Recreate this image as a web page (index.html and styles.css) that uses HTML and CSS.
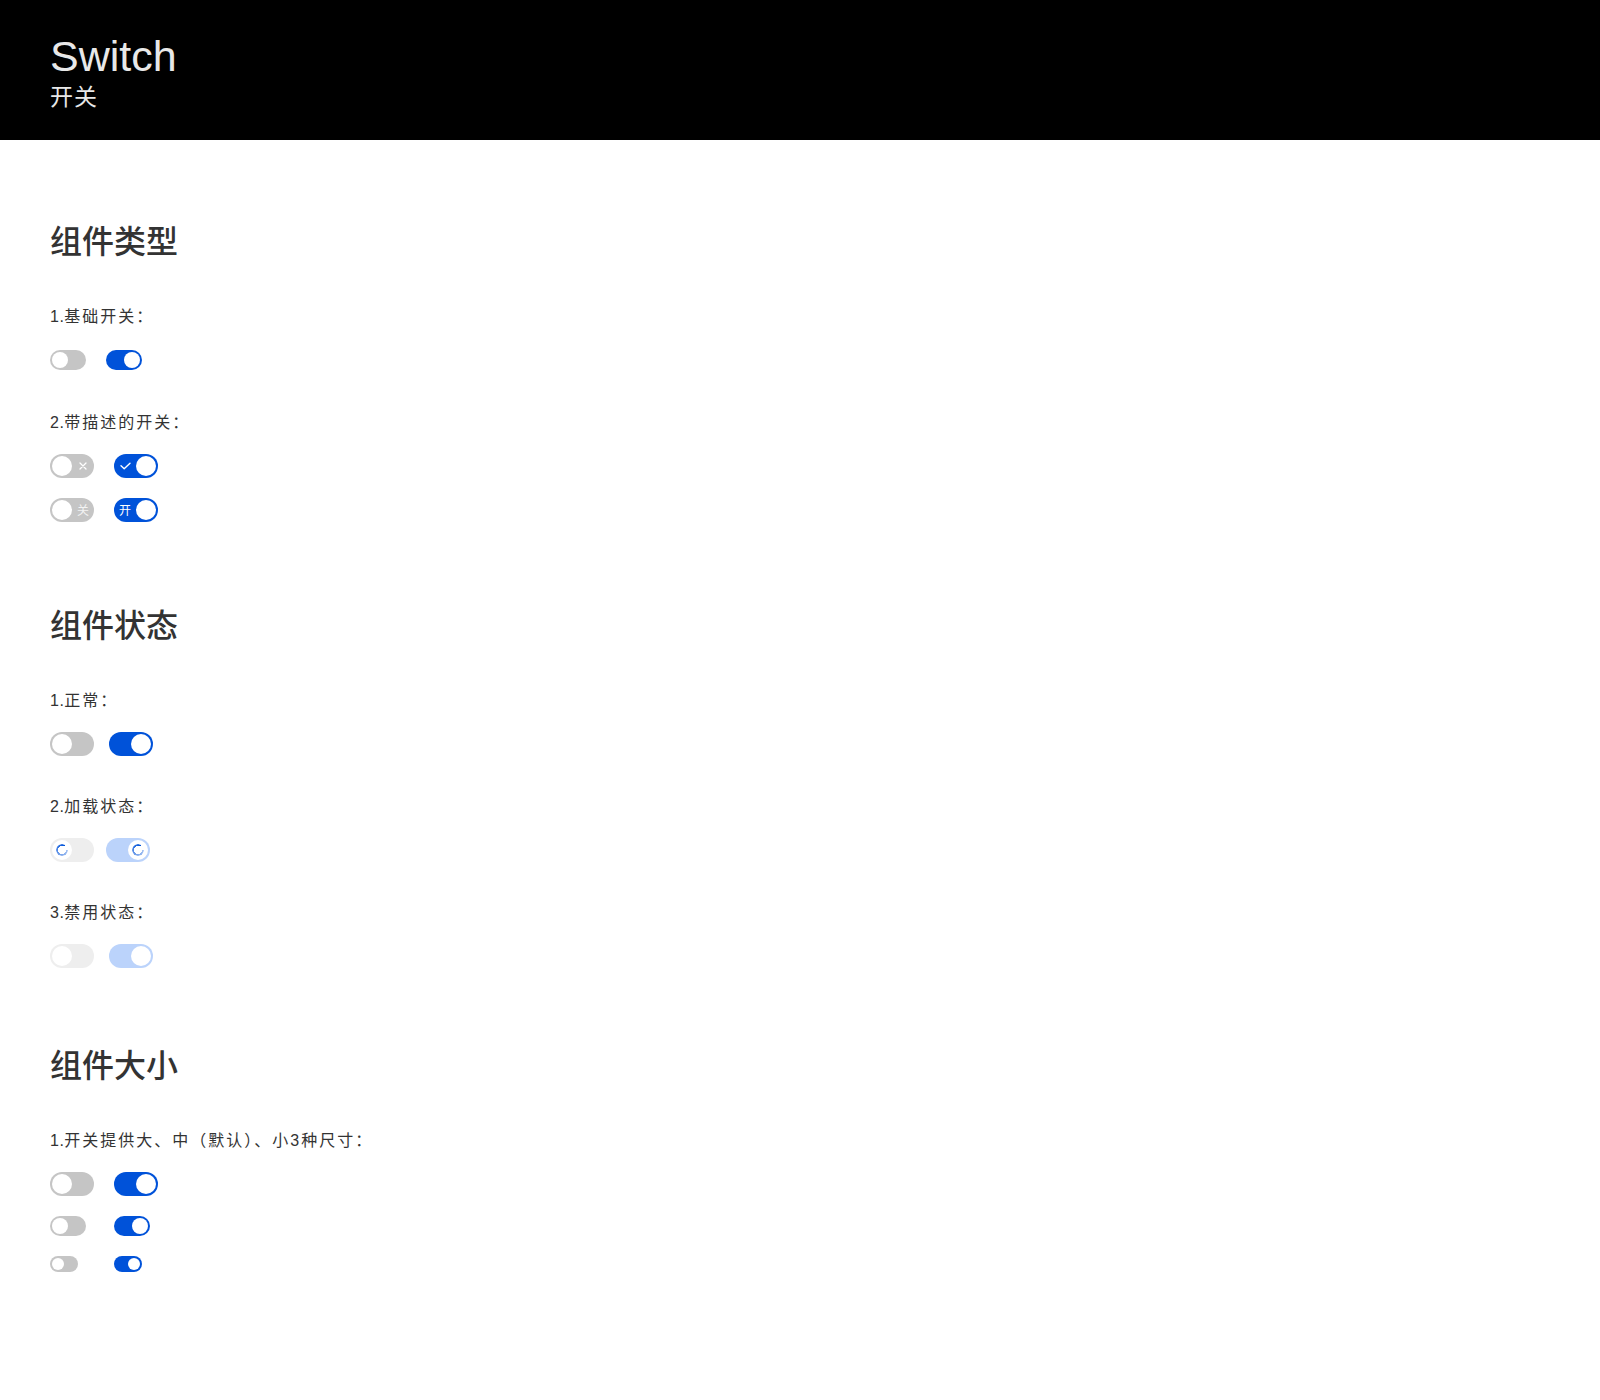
FILE: index.html
```html
<!DOCTYPE html>
<html lang="zh-CN">
<head>
<meta charset="utf-8">
<title>Switch 开关</title>
<link rel="stylesheet" href="styles.css">
</head>
<body>
<header class="page-header">
  <h1 class="page-title">Switch</h1>
  <p class="page-subtitle">开关</p>
</header>
<main class="content">
  <section class="demo-section">
    <h2 class="section-title">组件类型</h2>
    <div class="demo-group">
      <p class="demo-label"><span class="num">1.</span>基础开关：</p>
      <div class="switch-rows">
        <div class="switch-row gap-20">
          <span class="switch switch--md"><span class="switch__knob"></span></span>
          <span class="switch switch--md is-on"><span class="switch__knob"></span></span>
        </div>
      </div>
    </div>
    <div class="demo-group">
      <p class="demo-label"><span class="num">2.</span>带描述的开关：</p>
      <div class="switch-rows">
        <div class="switch-row gap-20">
          <span class="switch switch--lg"><span class="switch__knob"></span><span class="switch__label"><svg class="icon-close" viewBox="0 0 8 8" width="8" height="8"><path d="M1 1L7 7M7 1L1 7" stroke="#fff" stroke-width="1.3" fill="none" stroke-linecap="round"/></svg></span></span>
          <span class="switch switch--lg is-on"><span class="switch__knob"></span><span class="switch__label"><svg class="icon-check" viewBox="0 0 11 8" width="11" height="8"><path d="M1 3.8L4.2 6.8L10 1.2" stroke="#fff" stroke-width="1.4" fill="none" stroke-linecap="round" stroke-linejoin="round"/></svg></span></span>
        </div>
        <div class="switch-row gap-20">
          <span class="switch switch--lg"><span class="switch__knob"></span><span class="switch__label">关</span></span>
          <span class="switch switch--lg is-on"><span class="switch__knob"></span><span class="switch__label">开</span></span>
        </div>
      </div>
    </div>
  </section>

  <section class="demo-section demo-section--states">
    <h2 class="section-title">组件状态</h2>
    <div class="demo-group">
      <p class="demo-label"><span class="num">1.</span>正常：</p>
      <div class="switch-rows">
        <div class="switch-row gap-15">
          <span class="switch switch--lg"><span class="switch__knob"></span></span>
          <span class="switch switch--lg is-on"><span class="switch__knob"></span></span>
        </div>
      </div>
    </div>
    <div class="demo-group">
      <p class="demo-label"><span class="num">2.</span>加载状态：</p>
      <div class="switch-rows">
        <div class="switch-row gap-12">
          <span class="switch switch--lg is-loading"><span class="switch__knob"><span class="spinner"></span></span></span>
          <span class="switch switch--lg is-on is-loading"><span class="switch__knob"><span class="spinner"></span></span></span>
        </div>
      </div>
    </div>
    <div class="demo-group">
      <p class="demo-label"><span class="num">3.</span>禁用状态：</p>
      <div class="switch-rows">
        <div class="switch-row gap-15">
          <span class="switch switch--lg is-disabled"><span class="switch__knob"></span></span>
          <span class="switch switch--lg is-on is-disabled"><span class="switch__knob"></span></span>
        </div>
      </div>
    </div>
  </section>

  <section class="demo-section demo-section--sizes">
    <h2 class="section-title">组件大小</h2>
    <div class="demo-group">
      <p class="demo-label"><span class="num">1.</span>开关提供大、中（默认）、小3种尺寸：</p>
      <div class="size-grid">
        <span class="switch switch--lg"><span class="switch__knob"></span></span>
        <span class="switch switch--lg is-on"><span class="switch__knob"></span></span>
        <span class="switch switch--md"><span class="switch__knob"></span></span>
        <span class="switch switch--md is-on"><span class="switch__knob"></span></span>
        <span class="switch switch--sm"><span class="switch__knob"></span></span>
        <span class="switch switch--sm is-on"><span class="switch__knob"></span></span>
      </div>
    </div>
  </section>
</main>
</body>
</html>
```

FILE: styles.css
```css
* { box-sizing: border-box; }

body {
  margin: 0;
  background: #fff;
  font-family: "Liberation Sans", "Noto Sans CJK SC", sans-serif;
  color: #333;
}

.page-header {
  background: #000;
  height: 140px;
  padding: 32px 50px 28px;
}

.page-title {
  margin: 0;
  font-size: 43px;
  line-height: 48px;
  font-weight: 400;
  color: #e8e8e8;
}

.page-subtitle {
  margin: 2px 0 0;
  font-size: 23px;
  line-height: 30px;
  letter-spacing: 1px;
  color: #e8e8e8;
}

.content {
  padding: 80px 50px 80px;
}

.demo-section--states {
  margin-top: 82px;
}

.demo-section--sizes {
  margin-top: 76px;
}

.section-title {
  margin: 0 0 41px;
  font-size: 32px;
  line-height: 44px;
  font-weight: 500;
  color: #333;
}

.demo-group + .demo-group {
  margin-top: 39px;
}

.demo-label {
  margin: 0 0 19px;
  font-size: 16px;
  line-height: 24px;
  letter-spacing: 2px;
  color: #333;
}

.demo-label .num {
  letter-spacing: 0.5px;
}

.switch-rows {
  display: flex;
  flex-direction: column;
  gap: 20px;
}

.switch-row {
  display: flex;
  align-items: center;
  min-height: 24px;
}

.gap-20 { gap: 20px; }
.gap-15 { gap: 15px; }
.gap-12 { gap: 12px; }

.size-grid {
  display: grid;
  grid-template-columns: 64px auto;
  row-gap: 20px;
  align-items: center;
  justify-items: start;
}

/* switch */
.switch {
  display: flex;
  align-items: center;
  flex: none;
  border-radius: 999px;
  background: #c5c5c5;
}

.switch.is-on {
  flex-direction: row-reverse;
  background: #0052d9;
}

.switch--lg { width: 44px; height: 24px; }
.switch--md { width: 36px; height: 20px; }
.switch--sm { width: 28px; height: 16px; }

.switch__knob {
  flex: none;
  display: flex;
  align-items: center;
  justify-content: center;
  margin: 0 2px;
  border-radius: 50%;
  background: #fff;
}

.switch--lg .switch__knob { width: 20px; height: 20px; }
.switch--md .switch__knob { width: 16px; height: 16px; }
.switch--sm .switch__knob { width: 12px; height: 12px; }

.switch__label {
  flex: 1;
  display: flex;
  align-items: center;
  justify-content: center;
  font-family: "Noto Sans CJK SC", sans-serif;
  font-size: 12px;
  line-height: 12px;
  color: #fff;
}

.switch:not(.is-on) .switch__label {
  padding-right: 2px;
  color: #f3f3f3;
}

.switch.is-on .switch__label {
  padding-left: 2px;
}

.icon-close, .icon-check { display: block; }

.switch.is-loading,
.switch.is-disabled {
  background: #eeeeee;
}

.switch.is-on.is-loading,
.switch.is-on.is-disabled {
  background: #bbd3fb;
}

.spinner {
  display: block;
  width: 12px;
  height: 12px;
  border-radius: 50%;
  background: conic-gradient(from 90deg, rgba(0, 82, 217, 0.35) 0deg, rgba(0, 82, 217, 0.55) 120deg, #0052d9 300deg, rgba(0, 82, 217, 0) 302deg);
  -webkit-mask: radial-gradient(farthest-side, transparent calc(100% - 2.1px), #000 calc(100% - 1.9px));
  mask: radial-gradient(farthest-side, transparent calc(100% - 2.1px), #000 calc(100% - 1.9px));
}
```
